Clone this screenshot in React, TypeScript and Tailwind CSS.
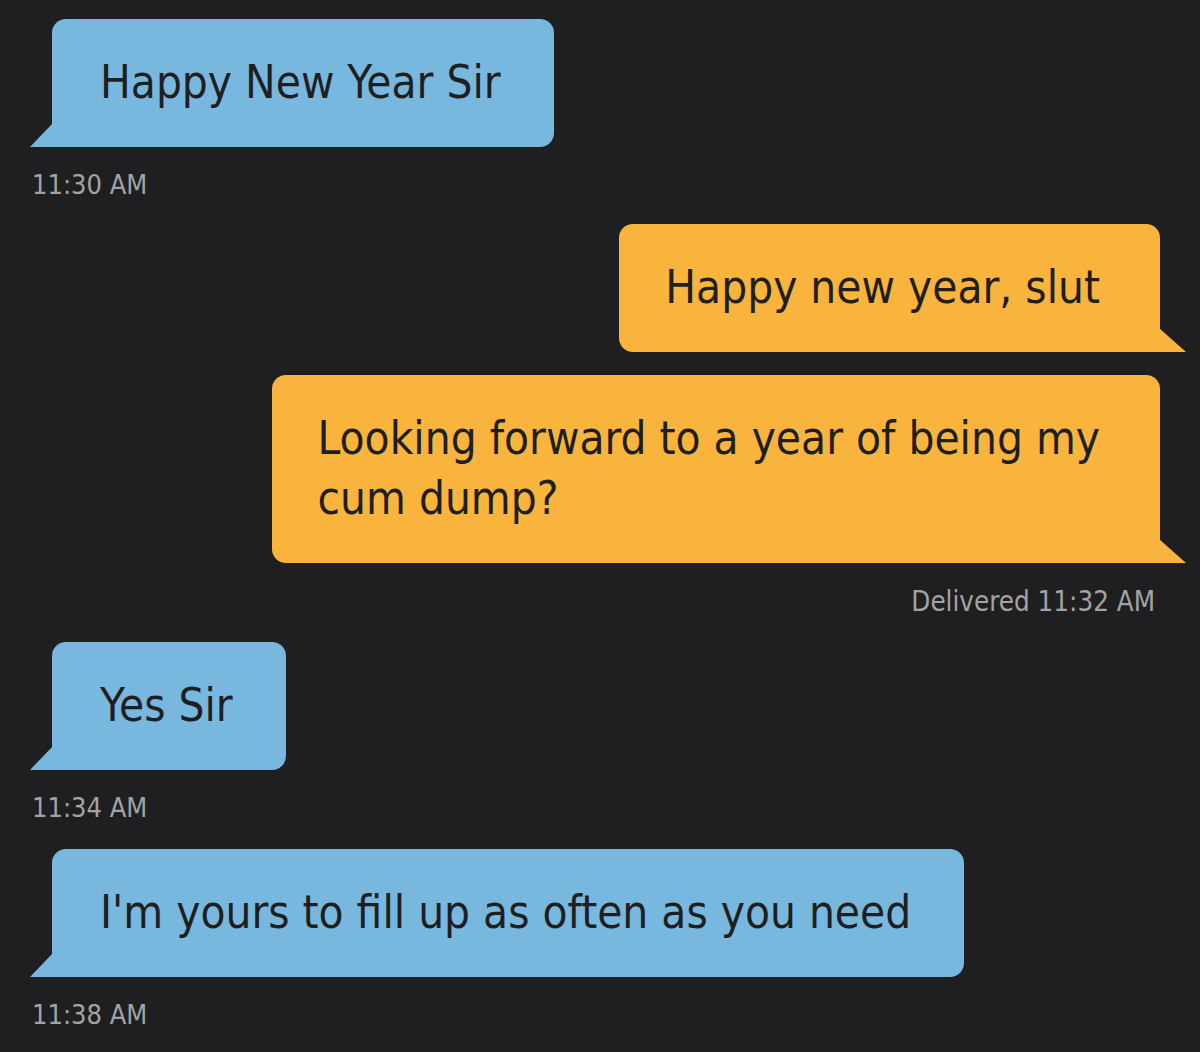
const font = { fontFamily: '"DejaVu Sans Condensed", "DejaVu Sans", sans-serif' };

type Msg = { side: 'in' | 'out'; lines: string[] };

function Bubble({ side, lines }: Msg) {
  const incoming = side === 'in';
  return (
    <div
      className={
        incoming
          ? "relative self-start ml-[52px] rounded-[14px] rounded-bl-none bg-[#79b8de] pl-[48px] pr-[53px] py-[34px] before:absolute before:content-[''] before:left-[-22px] before:bottom-0 before:w-[23px] before:h-[24px] before:bg-[#79b8de] before:[clip-path:polygon(100%_0,100%_100%,0_100%)]"
          : "relative self-end mr-[40px] rounded-[14px] rounded-br-none bg-[#f8b43c] pl-[46px] pr-[60px] py-[34px] before:absolute before:content-[''] before:right-[-26px] before:bottom-0 before:w-[27px] before:h-[24px] before:bg-[#f8b43c] before:[clip-path:polygon(0_0,100%_100%,0_100%)]"
      }
    >
      {lines.map((l) => (
        <p key={l} className="text-[45.5px] leading-[60px] text-[#1f1f22] whitespace-nowrap">
          {l}
        </p>
      ))}
    </div>
  );
}

function Stamp({ children, right }: { children: string; right?: boolean }) {
  return (
    <p
      className={
        right
          ? 'self-end mr-[45px] mt-[22px] text-[27.5px] leading-[32px] text-[#a3a3a5]'
          : 'self-start ml-[32px] mt-[22px] text-[27px] leading-[32px] text-[#a3a3a5]'
      }
    >
      {children}
    </p>
  );
}

export default function App() {
  return (
    <div className="w-[1200px] h-[1052px] bg-[#1f1f21] overflow-hidden flex flex-col pt-[19px]" style={font}>
      <Bubble side="in" lines={['Happy New Year Sir']} />
      <Stamp>11:30 AM</Stamp>

      <div className="mt-[23px] flex flex-col gap-[23px]">
        <Bubble side="out" lines={['Happy new year, slut']} />
        <Bubble side="out" lines={['Looking forward to a year of being my', 'cum dump?']} />
      </div>
      <Stamp right>Delivered 11:32 AM</Stamp>

      <div className="mt-[25px] flex flex-col">
        <Bubble side="in" lines={['Yes Sir']} />
      </div>
      <Stamp>11:34 AM</Stamp>

      <div className="mt-[25px] flex flex-col">
        <Bubble side="in" lines={["I'm yours to fill up as often as you need"]} />
      </div>
      <Stamp>11:38 AM</Stamp>
    </div>
  );
}
